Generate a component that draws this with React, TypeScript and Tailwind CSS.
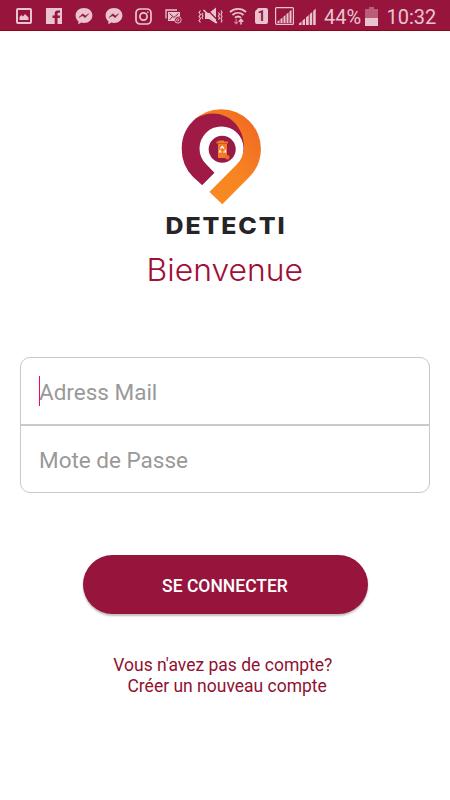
import React from "react";

function Messenger({ className }: { className: string }) {
  return (
    <svg className={className} viewBox="0 0 18 18" fill="none">
      <path d="M9 1C4.2 1 .6 4.2.6 8.4c0 2.5 1.1 4.5 2.8 5.8L3.4 17.2l2.9-1.6c.9.2 1.7.3 2.7.3 4.8 0 8.4-3.2 8.4-7.5S13.800 1 9 1Z" fill="#e9c4d0" />
      <path d="M3.900 10.600 7.700 6.700l2.700 2 3.500-2.100-3.700 4.100-2.700-2-3.600 1.900Z" fill="#97153d" stroke="#97153d" strokeWidth=".4" />
    </svg>
  );
}

function StatusBar() {
  return (
    <header className="flex h-[31px] shrink-0 items-center border-b border-[#8c0711] bg-[#97153d] pl-4 pt-[2px] text-[#e9c4d0]">
      <svg className="h-4 w-4 shrink-0" viewBox="0 0 16 16" fill="none">
        <rect x="1" y="1" width="14" height="14" rx="1" stroke="currentColor" strokeWidth="2" />
        <path d="M3.500 12V9l2-2 1.500 1.500L9 6l3.500 3.500V12Z" fill="currentColor" />
      </svg>
      <svg className="ml-[14px] h-4 w-4 shrink-0" viewBox="0 0 16 16">
        <path d="M0 0h16v16h-4.500V10h2.200l.3-2.500h-2.500V6c0-1 .4-1.300 1.300-1.300H14V2.400h-2.200C9.700 2.400 8.700 3.600 8.700 5.500v2H6.500V10h2.200v6H0Z" fill="currentColor" />
      </svg>
      <Messenger className="ml-[12.500px] h-[18px] w-[18px] shrink-0" />
      <Messenger className="ml-[12px] h-[18px] w-[18px] shrink-0" />
      <svg className="ml-[12.500px] h-[17px] w-[17px] shrink-0" viewBox="0 0 17 17" fill="none" stroke="currentColor" strokeWidth="1.700">
        <rect x="1" y="1" width="15" height="15" rx="4" />
        <circle cx="8.500" cy="8.500" r="3.600" />
        <circle cx="12.800" cy="4.200" r=".5" strokeWidth="1" />
      </svg>
      <svg className="ml-[13px] h-4 w-[17px] shrink-0" viewBox="0 0 17 16" fill="none">
        <path d="M1 10.500V2h11" stroke="currentColor" strokeWidth="1.300" />
        <path d="M3 4h12v4c-3.500-.3-5.500 2-5.500 5H3Z" fill="currentColor" />
        <path d="m4.500 5.500 4.500 4 4.500-4M4.500 12l3-3.500" stroke="#97153d" />
        <circle cx="12.900" cy="11.800" r="3.300" stroke="currentColor" strokeWidth=".9" />
        <circle cx="12.700" cy="11.800" r="1.200" stroke="currentColor" strokeWidth=".9" />
      </svg>
      <svg className="ml-[16px] h-[18px] w-[25px] shrink-0" viewBox="0 0 25 18" fill="none">
        <path d="M7 6h4l7-5.500v16L11 12H7Z" fill="currentColor" />
        <path d="m8 1.500 13 13" stroke="#97153d" strokeWidth="1.300" />
        <path d="m5.500 3 13.500 13" stroke="currentColor" strokeWidth="1.700" />
        <path d="M2.500 3.500 1 5.500 2.500 7.500 1 9.500 2.500 11.500 1 13.500 2.500 15.500M5 6 4 7.500l1 1.500-1 1.500 1 1.500M20.500 5.500l1 1.800-1 1.800 1 1.800-1 1.800M23 3.500l1 2-1 2 1 2-1 2 1 2-1 2" stroke="currentColor" strokeWidth="1.100" />
      </svg>
      <svg className="ml-[5.500px] h-[18px] w-[18px] shrink-0" viewBox="0 0 18 18" fill="none" stroke="currentColor">
        <path d="M1 5c4.500-4.200 11.500-4.200 16 0M3.500 8c3.300-2.900 7.700-2.900 11 0M6 10.800c1.900-1.600 4.100-1.600 6 0" strokeWidth="1.900" />
        <path d="M7.200 12v4.500M5.400 14.800l1.800 1.800 1.800-1.800" strokeWidth="1.100" opacity=".65" />
        <path d="M12 17.500v-5M9.800 14.700l2.200-2.300 2.200 2.300" strokeWidth="1.500" />
      </svg>
      <div className="ml-[8.500px] flex h-4 w-[13px] shrink-0 items-center justify-center rounded-[2px] bg-[#e9c4d0] font-['Roboto',sans-serif] text-[14px] font-bold text-[#97153d] [clip-path:polygon(25%_0,100%_0,100%_100%,0_100%,0_20%)]">1</div>
      <svg className="ml-[7px] h-[18px] w-[19px] shrink-0" viewBox="0 0 19 18" fill="none">
        <rect x=".6" y=".6" width="17.800" height="16.800" rx="1" stroke="currentColor" strokeWidth="1.200" />
        <path d="M2.500 16v-1.500l2-1.500v3ZM5.500 16v-4l2-1.500V16ZM8.500 16V9.500l2-1.500v8ZM11.500 16V7l2-1.500V16ZM14.500 16V4.500l2-1.700V16Z" fill="currentColor" />
      </svg>
      <svg className="ml-[5px] h-[17px] w-[17px] shrink-0" viewBox="0 0 17 17" fill="currentColor">
        <path d="M0 17v-1.500L2.500 13.500V17ZM3.500 17v-4.500L6 10.500V17ZM7 17V9.500L9.700 7v10ZM10.700 17V6.200l2.500-2.200v13ZM14.200 17V3l2.500-2.500V17Z" />
      </svg>
      <span className="ml-[8px] w-[38px] shrink-0 whitespace-nowrap pt-px font-['Roboto',sans-serif] text-[20px] leading-none">44%</span>
      <svg className="ml-[3px] h-[19px] w-[13px] shrink-0" viewBox="0 0 13 19">
        <path d="M4 0h5v2h4v17H0V2h4Z" fill="#b95d7b" />
        <path d="M0 11h13v8H0Z" fill="currentColor" />
      </svg>
      <span className="ml-[8.500px] whitespace-nowrap pt-px font-['Roboto',sans-serif] text-[20px] leading-none">10:32</span>
    </header>
  );
}

function Logo() {
  return (
    <svg className="h-[98px] w-[82px]" viewBox="181 108 82 98" role="img" aria-label="Detecti">
      <defs>
        <linearGradient id="orange" x1="0" y1="1" x2="1" y2="0">
          <stop offset="0" stopColor="#fa8e22" />
          <stop offset=".5" stopColor="#f78422" />
          <stop offset="1" stopColor="#ee6422" />
        </linearGradient>
      </defs>
      <path d="M193.100 121A39.700 39.700 0 0 1 221.200 109.300A39.700 39.700 0 0 1 260.900 149A39.700 39.700 0 0 1 249.300 177L222.300 204.300 209.300 191.700 237 164 243 148 233 122Z" fill="url(#orange)" />
      <path d="M202.300 185.300 193.100 177A39.700 39.700 0 0 1 181.700 149A39.700 39.700 0 0 1 196 118.300C218 105 244 120 244 147Q244 154 238 162L206 163.500 214.700 172.700Z" fill="#9f1b45" />
      <path d="M214.700 172.700 206 164A22 22 0 1 1 237.200 163.800L209.300 191.700 202.300 185.300Z" fill="white" />
      <circle cx="222.200" cy="149.300" r="13.500" fill="#971b45" />
      <path d="M218.500 140.500h5.500v1h4v2h-1v14.500h-9V143.500h-1.500v-2h2Z" fill="#f47a24" />
      <path d="M217 143.500h10.500" stroke="#c2452f" strokeWidth=".7" />
      <path d="m220.500 148.500 1.700-2 1.700 2M225 149.500l.5 2.500h-2.300M221.500 152h-2l.8-2.300" fill="none" stroke="white" strokeWidth="1.200" />
      <circle cx="227.300" cy="157.300" r="2.200" fill="#ef6a22" />
    </svg>
  );
}

export default function App() {
  return (
    <div className="flex h-[800px] w-[450px] flex-col overflow-hidden bg-white font-['Roboto',sans-serif]">
      <StatusBar />
      <main className="flex flex-1 flex-col items-center px-5 pt-[77px]">
        <div className="flex w-full justify-center pr-[6px]"><Logo /></div>
        <svg className="mt-[2px] h-[36px] w-[130px]" viewBox="0 0 130 36">
          <text x="5.500" y="26" textLength="121" lengthAdjust="spacingAndGlyphs" letterSpacing="1.700" fill="#262425" fontFamily="Inter, sans-serif" fontSize="22.500" fontWeight="800">DETECTI</text>
        </svg>
        <h1 className="mt-[6px] h-[40px]">
          <svg className="h-[40px] w-[170px]" viewBox="0 0 170 40">
            <text x="6.500" y="31" textLength="156.500" lengthAdjust="spacingAndGlyphs" fill="#a00f35" fontFamily="Inter, sans-serif" fontSize="31" fontWeight="300">Bienvenue</text>
          </svg>
        </h1>
        <form className="mt-[67px] flex h-[136px] w-[410px] shrink-0 flex-col rounded-[10px] border border-[#c8c8c8]" onSubmit={(e) => e.preventDefault()}>
          <label className="flex h-[68px] shrink-0 items-center border-b-[2px] border-[#cacaca] pl-[18px]">
            <span className="z-10 h-[30px] w-px shrink-0 bg-[#f5085c]" />
            <input aria-label="Adress Mail" placeholder="Adress Mail" className="-ml-px mt-[3px] w-[360px] bg-transparent text-[22.500px] outline-none placeholder:text-[#999]" />
          </label>
          <input aria-label="Mote de Passe" type="password" placeholder="Mote de Passe" className="mt-px h-[66px] w-full bg-transparent pl-[18px] text-[22.500px] outline-none placeholder:text-[#999]" />
        </form>
        <button className="mt-[62px] h-[59px] w-[285px] shrink-0 rounded-full bg-[#97153d] pt-[3px] text-[17.500px] font-medium text-white shadow-[0_2px_2px_rgba(0,0,0,0.25)]">SE CONNECTER</button>
        <p className="mt-[41px] whitespace-pre text-center text-[17.500px] leading-[21px] text-[#91112f]">{"Vous n'avez pas de compte? \n Créer un nouveau compte"}</p>
      </main>
    </div>
  );
}
